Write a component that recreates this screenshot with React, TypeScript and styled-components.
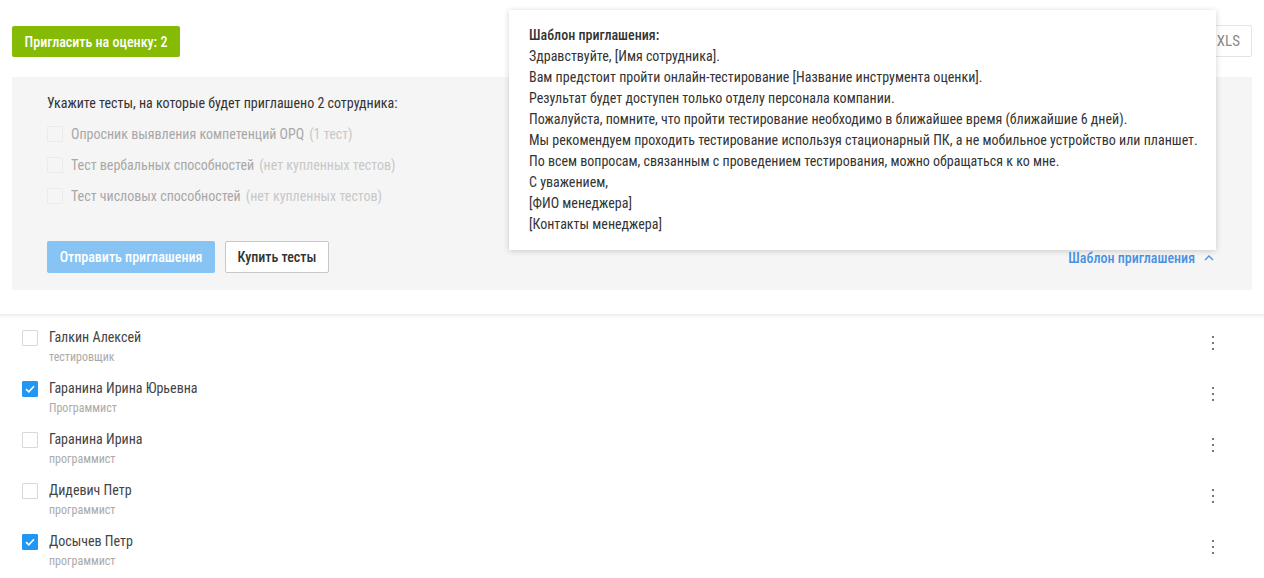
import React from "react";
import styled, { createGlobalStyle } from "styled-components";

const Global = createGlobalStyle`
  html, body { margin: 0; padding: 0; background: #fff; }
  body { font-family: "Roboto Condensed", Roboto, Arial, sans-serif; color: #333; font-size: 14px; }
  * { box-sizing: border-box; }
  button { font-family: inherit; }
`;

const Page = styled.div`
  position: relative;
  width: 1264px;
  height: 578px;
  overflow: hidden;
  padding: 26px 12px 0 12px;
`;

const TopBar = styled.div`
  display: flex;
  justify-content: space-between;
  align-items: flex-start;
  height: 51px;
`;

const GreenButton = styled.button`
  height: 31px;
  width: 168px;
  padding: 0;
  border: none;
  border-radius: 2px;
  background: #86bb05;
  color: #fff;
  font-size: 14px;
  font-weight: 500;
  cursor: pointer;
`;

const XlsButton = styled.button`
  height: 32px;
  margin-top: -1px;
  padding: 0 11px 0 12px;
  border: 1px solid #e3e3e3;
  border-radius: 2px;
  background: #fff;
  color: #8a8a8a;
  font-size: 15px;
`;

const Panel = styled.div`
  background: #f5f5f5;
  height: 213px;
  padding: 16px 35px 17px 35px;
  display: flex;
  flex-direction: column;
`;

const PanelTitle = styled.div`
  font-size: 14px;
  color: #333;
  line-height: 20px;
  margin-bottom: 5px;
`;

const TestRow = styled.label`
  display: flex;
  align-items: center;
  height: 31px;
  font-size: 14px;
  color: #a8a8a8;
`;

const Muted = styled.span`
  color: #c8c8c8;
  margin-left: 5px;
`;

const Box = styled.span<{ $checked?: boolean; $faint?: boolean }>`
  width: 16px;
  height: 16px;
  flex: none;
  border: 1px solid ${(p) => (p.$checked ? "#2196f3" : p.$faint ? "#ebebeb" : "#d6d9dc")};
  background: ${(p) => (p.$checked ? "#2196f3" : p.$faint ? "#f5f5f5" : "#fff")};
  border-radius: 1px;
  display: flex;
  align-items: center;
  justify-content: center;
`;

const TestBox = styled(Box)`
  margin-right: 8px;
`;

const PanelFooter = styled.div`
  margin-top: auto;
  display: flex;
  align-items: flex-end;
  justify-content: space-between;
`;

const ButtonGroup = styled.div`
  display: flex;
  gap: 10px;
`;

const SendButton = styled.button`
  height: 32px;
  width: 168px;
  padding: 0;
  border: none;
  border-radius: 2px;
  background: #87c4f4;
  color: #fff;
  font-size: 14px;
  font-weight: 500;
`;

const BuyButton = styled.button`
  height: 32px;
  width: 104px;
  padding: 0;
  border: 1px solid #c8c8c8;
  border-radius: 2px;
  background: #fff;
  color: #333;
  font-size: 14px;
  font-weight: 500;
`;

const TemplateLink = styled.a`
  display: flex;
  align-items: center;
  gap: 9px;
  margin-right: 3px;
  margin-bottom: 7px;
  color: #4a90e2;
  font-size: 14px;
  font-weight: 500;
  text-decoration: none;
  cursor: pointer;
`;

const Popup = styled.div`
  position: absolute;
  left: 509px;
  top: 10px;
  width: 707px;
  height: 240px;
  background: #fff;
  box-shadow: 0 1px 6px rgba(0, 0, 0, 0.18);
  padding: 15px 20px;
  font-size: 14px;
  line-height: 21px;
  color: #333;
  white-space: nowrap;
  z-index: 2;
`;

const PopupTitle = styled.div`
  font-weight: 500;
`;

const Divider = styled.div`
  margin: 24px -12px 0 -12px;
  height: 4px;
  background: linear-gradient(#eeeeee, #f7f7f7 60%, #fff);
`;

const List = styled.div`
  display: flex;
  flex-direction: column;
  padding-top: 9px;
`;

const Row = styled.div`
  display: flex;
  align-items: flex-start;
  height: 51px;
  padding-left: 10px;
  padding-right: 38px;
`;

const RowBox = styled(Box)`
  margin-top: 3px;
  margin-right: 11px;
`;

const Person = styled.div`
  flex: 1;
  display: flex;
  flex-direction: column;
`;

const Name = styled.div`
  font-size: 14px;
  color: #444;
  line-height: 20px;
`;

const Role = styled.div`
  font-size: 12px;
  color: #aaa;
  line-height: 20px;
`;

const Kebab = styled.div`
  display: flex;
  flex-direction: column;
  gap: 4px;
  margin-top: 9px;
  span {
    width: 2px;
    height: 2px;
    background: #777;
  }
`;

const Check = () => (
  <svg width="10" height="8" viewBox="0 0 10 8">
    <path d="M1 4.2 L3.8 6.8 L9 1.2" fill="none" stroke="#fff" strokeWidth="1.6" />
  </svg>
);

const people = [
  { name: "Галкин Алексей", role: "тестировщик", checked: false },
  { name: "Гаранина Ирина Юрьевна", role: "Программист", checked: true },
  { name: "Гаранина Ирина", role: "программист", checked: false },
  { name: "Дидевич Петр", role: "программист", checked: false },
  { name: "Досычев Петр", role: "программист", checked: true },
];

const tests = [
  { name: "Опросник выявления компетенций OPQ", note: "(1 тест)" },
  { name: "Тест вербальных способностей", note: "(нет купленных тестов)" },
  { name: "Тест числовых способностей", note: "(нет купленных тестов)" },
];

const popupLines = [
  "Здравствуйте, [Имя сотрудника].",
  "Вам предстоит пройти онлайн-тестирование [Название инструмента оценки].",
  "Результат будет доступен только отделу персонала компании.",
  "Пожалуйста, помните, что пройти тестирование необходимо в ближайшее время (ближайшие 6 дней).",
  "Мы рекомендуем проходить тестирование используя стационарный ПК, а не мобильное устройство или планшет.",
  "По всем вопросам, связанным с проведением тестирования, можно обращаться к ко мне.",
  "С уважением,",
  "[ФИО менеджера]",
  "[Контакты менеджера]",
];

export default function App() {
  return (
    <>
      <Global />
      <Page>
        <TopBar>
          <GreenButton>Пригласить на оценку: 2</GreenButton>
          <XlsButton>Экспорт в XLS</XlsButton>
        </TopBar>
        <Panel>
          <PanelTitle>Укажите тесты, на которые будет приглашено 2 сотрудника:</PanelTitle>
          {tests.map((t) => (
            <TestRow key={t.name}>
              <TestBox $faint />
              {t.name}
              <Muted>{t.note}</Muted>
            </TestRow>
          ))}
          <PanelFooter>
            <ButtonGroup>
              <SendButton>Отправить приглашения</SendButton>
              <BuyButton>Купить тесты</BuyButton>
            </ButtonGroup>
            <TemplateLink>
              Шаблон приглашения
              <svg width="10" height="6" viewBox="0 0 10 6">
                <path d="M1 5 L5 1 L9 5" fill="none" stroke="#4a90e2" strokeWidth="1.3" />
              </svg>
            </TemplateLink>
          </PanelFooter>
        </Panel>
        <Divider />
        <List>
          {people.map((p) => (
            <Row key={p.name}>
              <RowBox $checked={p.checked}>{p.checked && <Check />}</RowBox>
              <Person>
                <Name>{p.name}</Name>
                <Role>{p.role}</Role>
              </Person>
              <Kebab>
                <span />
                <span />
                <span />
              </Kebab>
            </Row>
          ))}
        </List>
        <Popup>
          <PopupTitle>Шаблон приглашения:</PopupTitle>
          {popupLines.map((l) => (
            <div key={l}>{l}</div>
          ))}
        </Popup>
      </Page>
    </>
  );
}
